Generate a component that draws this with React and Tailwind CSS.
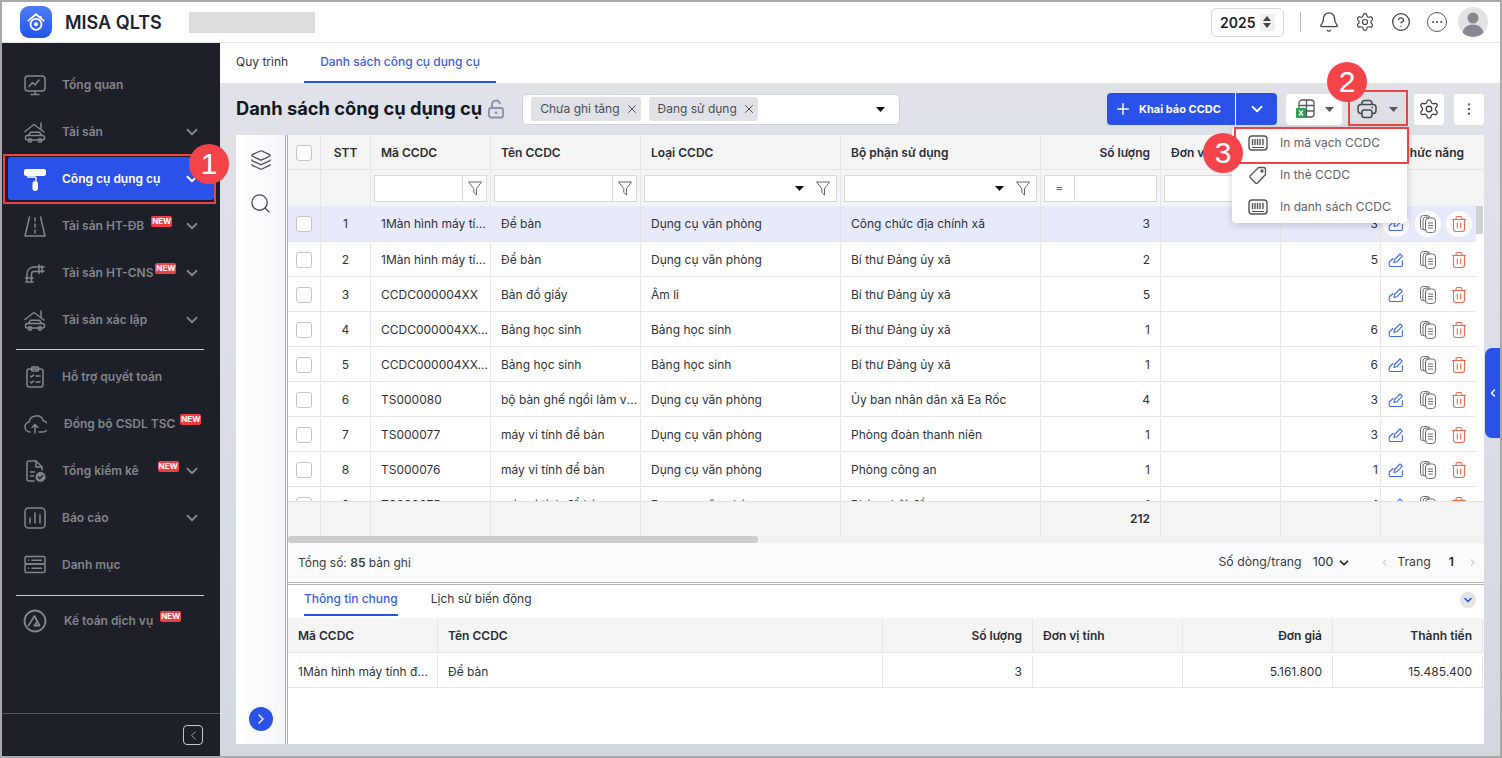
import React from "react";
import { Bell, Settings, CircleHelp, Ellipsis, Layers, Search, Plus, ChevronDown, ChevronLeft, ChevronRight, X, EllipsisVertical } from "lucide-react";

const S = ({ size = 24, className = "", children, sw = 1.5, vb = "0 0 24 24" }) => (
  <svg width={size} height={size} viewBox={vb} fill="none" stroke="currentColor" strokeWidth={sw} strokeLinecap="round" strokeLinejoin="round" className={className}>{children}</svg>
);

const HouseCar = () => (
  <S><path d="M2 11.5 11 4.5 21 12" /><path d="M18 9.5V3" /><path d="M5.5 15.5 7.5 12.2h9l2 3.3" /><rect x="2.5" y="15.5" width="19" height="4.5" rx="2" /><circle cx="7" cy="20.5" r="1.7" /><circle cx="17" cy="20.5" r="1.7" /></S>
);
const sideIcons = {
  monitor: <S><rect x="2" y="3" width="20" height="15" rx="3" /><path d="M6 13.5l3.5-4 2.5 2.5 4-5" /><path d="M12 18v3M8 21.5h8" /></S>,
  house: <HouseCar />,
  roller: <svg width="24" height="24" viewBox="0 0 24 24"><rect x="1" y="2" width="22" height="7" rx="2.2" fill="#fff" /><path d="M4 10h8a1 1 0 0 1 1 1v3" fill="none" stroke="#fff" strokeWidth="1.4" /><rect x="9.5" y="14" width="5.5" height="10" rx="2.7" fill="#fff" /></svg>,
  road: <S><path d="M6.5 3 2 22h20L17.5 3" /><path d="M12 4v3M12 10v3M12 16v3" /></S>,
  pipe: <S><path d="M4 20v-7a7 7 0 0 1 7-7h5" /><path d="M8.5 20v-7a2.5 2.5 0 0 1 2.5-2.5h5" /><path d="M16 4v8.5M19 5v6.5M16 6h3M16 10.5h3M19 6h2M19 10h2" /><path d="M2.5 17h7.5M2.5 21h7.5" /></S>,
  clip: <S><rect x="4" y="4" width="16" height="18" rx="2.2" /><rect x="8.5" y="2" width="7" height="4" rx="1" /><path d="M7.5 11l1 1 2-2M7.5 17l1 1 2-2M13 11h4M13 17h4" /></S>,
  cloud: <S><path d="M7 20a5 5 0 0 1-1-9.9A7.5 7.5 0 0 1 20.5 9a5.5 5.5 0 0 1-1 11H16" /><path d="M12 21v-8M9 15.5l3-3 3 3" /></S>,
  file: <svg width="24" height="24" viewBox="0 0 24 24" fill="none" stroke="currentColor" strokeWidth="1.5" strokeLinecap="round" strokeLinejoin="round"><path d="M11 22H6a2 2 0 0 1-2-2V4a2 2 0 0 1 2-2h7l6 6v3" /><path d="M13 2v6h6M7.5 13h4M7.5 17h3" /><circle cx="17.5" cy="18" r="5" fill="currentColor" stroke="none" /><path d="M15.3 18l1.6 1.6 2.8-3" stroke="#1d2029" /></svg>,
  chart: <S><rect x="2" y="2" width="20" height="20" rx="3.5" /><path d="M7 17v-5M12 17V7M17 17v-8" /></S>,
  list: <S><rect x="2" y="3.5" width="20" height="7.5" rx="1.5" /><rect x="2" y="11" width="20" height="8.5" rx="1.5" /><path d="M5.5 7.2h.1M9 7.2h9.5M5.5 15.2h.1M9 15.2h9.5" /></S>,
  logo: <S sw={1.8}><circle cx="12" cy="12" r="10.5" /><path d="M5.5 16.5 11.5 7l5 9.5h-5l2-3" /></S>,
};

const Ic = ({ n }) => <span className="w-[24px] h-[24px] shrink-0 flex items-center justify-center">{sideIcons[n]}</span>;

const New = ({ ml }) => (
  <span className={`${ml} relative -top-[4px] h-[11px] w-[21px] rounded-[2px] bg-[#ee3f46] text-white text-[8px] leading-[11px] font-bold text-center shrink-0`}>NEW</span>
);

const NavItem = ({ icon, label, chev, badge, active, shift }) => (
  <div className={`h-[47px] flex items-center ${active ? "text-white" : "text-[#83868d]"}`}>
    <div className={`flex items-center w-full pl-[21px] pr-[19px] ${active ? "h-[43px] mx-[6px] !pl-[15px] !pr-[13px] rounded-[3px] bg-[#2b52e8]" : "h-[47px]"}`}>
      <Ic n={icon} />
      <span className={`${shift ? "ml-[17px]" : "ml-[15px]"} text-[12px] whitespace-nowrap font-semibold`}>{label}</span>
      {badge && <New ml={badge} />}
      {chev && <ChevronDown size={18} strokeWidth={2.4} className="ml-auto shrink-0" />}
    </div>
  </div>
);

const Sidebar = () => (
  <aside className="w-[218px] shrink-0 bg-[#1d2029] flex flex-col pt-[18px]">
    <NavItem icon="monitor" label="Tổng quan" />
    <NavItem icon="house" label="Tài sản" chev />
    <NavItem icon="roller" label="Công cụ dụng cụ" chev active />
    <NavItem icon="road" label="Tài sản HT-ĐB" chev badge="ml-[7px]" />
    <NavItem icon="pipe" label="Tài sản HT-CNS" chev badge="ml-[2px]" />
    <NavItem icon="house" label="Tài sản xác lập" chev />
    <div className="mt-[6px] mb-[3px] ml-[14px] mr-[16px] h-[1px] bg-[#c9ccd3]" />
    <NavItem icon="clip" label="Hỗ trợ quyết toán" />
    <NavItem icon="cloud" label="Đồng bộ CSDL TSC" badge="ml-[5px]" shift />
    <NavItem icon="file" label="Tổng kiểm kê" chev badge="ml-[19px]" />
    <NavItem icon="chart" label="Báo cáo" chev />
    <NavItem icon="list" label="Danh mục" />
    <div className="mt-[7px] mb-[1px] ml-[14px] mr-[16px] h-[1px] bg-[#c9ccd3]" />
    <NavItem icon="logo" label="Kế toán dịch vụ" badge="ml-[7px]" shift />
    <div className="mt-auto h-[43px] border-t border-[#54565d] flex items-center justify-end pr-[17px]">
      <span className="w-[20px] h-[20px] border border-[#c4c6cb] rounded-[4px] flex items-center justify-center text-[#c4c6cb]"><ChevronLeft size={15} strokeWidth={1.2} /></span>
    </div>
  </aside>
);

const Header = () => (
  <header className="h-[41px] shrink-0 bg-white border-b border-[#e3e3e3] flex items-center pl-[18px] pr-[12px]">
    <span className="w-[32px] h-[32px] rounded-[9px] bg-gradient-to-b from-[#4d7cf8] to-[#2353ea] flex items-center justify-center">
      <svg width="22" height="22" viewBox="0 0 24 24" fill="none" stroke="#fff" strokeWidth="2" strokeLinejoin="round"><path d="M3 11 12 3.5 21 11" /><path d="M17 5.5V8" /><circle cx="12" cy="14.5" r="6" /><circle cx="12" cy="14.5" r="2.2" fill="#fff" stroke="none" /></svg>
    </span>
    <span className="ml-[13px] text-[18px] font-semibold text-[#1d2330]">MISA QLTS</span>
    <span className="ml-[27px] w-[126px] h-[21px] bg-[#dedddc] blur-[0.5px]" />
    <div className="ml-auto flex items-center text-[#3d3f45]">
      <div className="w-[73px] h-[29px] border border-[#d8d8d8] rounded-[5px] flex items-center pl-[8px] gap-[4px]">
        <span className="text-[14px] font-semibold text-[#20242c]">2025</span>
        <span className="w-[15px] h-[17px] bg-[#f0f0f0] flex flex-col items-center justify-center gap-[2px]">
          <svg width="8" height="5" viewBox="0 0 8 5"><path d="M4 0 8 5H0z" fill="#444" /></svg>
          <svg width="8" height="5" viewBox="0 0 8 5"><path d="M4 5 8 0H0z" fill="#444" /></svg>
        </span>
      </div>
      <span className="ml-[16px] w-[1px] h-[20px] bg-[#bdbdbd]" />
      <Bell size={22} strokeWidth={1.4} className="ml-[17px]" />
      <Settings size={20} strokeWidth={1.4} className="ml-[15px]" />
      <CircleHelp size={20} strokeWidth={1.5} className="ml-[16px]" />
      <span className="ml-[16px] w-[20px] h-[20px] rounded-full border border-[#55585e] flex items-center justify-center"><Ellipsis size={14} strokeWidth={1.5} /></span>
      <span className="ml-[11px] w-[30px] h-[30px] rounded-full bg-[#e3e3e3] overflow-hidden flex items-center justify-center">
        <svg width="30" height="30" viewBox="0 0 30 30"><circle cx="15" cy="11" r="5.5" fill="#858890" /><path d="M4 30c0-9 5-12.500 11-12.500S26 21 26 30z" fill="#858890" /></svg>
      </span>
    </div>
  </header>
);

const Filter = () => (
  <svg width="16" height="16" viewBox="0 0 16 16" fill="none" stroke="#666" strokeWidth="1" strokeLinejoin="round" className="shrink-0"><path d="M1.500 2h13L9.500 8.500V15L6.800 12.500V8.500z" /></svg>
);
const Caret = ({ c = "#111" }) => <svg width="9" height="5" viewBox="0 0 9 5" className="shrink-0"><path d="M0 0h9L4.500 5z" fill={c} /></svg>;
const Barcode = () => (
  <svg width="20" height="16" viewBox="0 0 20 16" fill="none" stroke="#505359" className="shrink-0"><rect x="1" y="1" width="18" height="14" rx="3" strokeWidth="1.4" /><path d="M4.500 4v6M7 4v6M9.500 4v6M12 4v6M15 4v6" strokeWidth="1.4" /><path d="M4 12.500h12" strokeWidth="1" /></svg>
);
const Tag = () => (
  <svg width="20" height="20" viewBox="0 0 20 20" fill="none" stroke="#505359" strokeWidth="1.3" strokeLinejoin="round" className="shrink-0"><path d="M10.500 2.500h5a2 2 0 0 1 2 2v5l-8 8.500a1.400 1.400 0 0 1-2 0L2.300 12.800a1.400 1.400 0 0 1 0-2z" /><circle cx="14" cy="6" r="1" /></svg>
);
const Excel = () => (
  <svg width="22" height="22" viewBox="0 0 22 22" fill="none" className="shrink-0"><rect x="5" y="2" width="15" height="17" rx="3" stroke="#55585e" strokeWidth="1.3" /><path d="M5 7.500h15M5 13h15M12.500 2v17" stroke="#55585e" strokeWidth="1.300" /><rect x="2" y="10" width="10" height="10" rx="1" fill="#2e9e4f" /><path d="M5 12.500l4 5M9 12.500l-4 5" stroke="#fff" strokeWidth="1.300" /></svg>
);
const PrintIc = () => (
  <svg width="20" height="20" viewBox="0 0 20 20" fill="none" stroke="#45484e" strokeWidth="1.5" strokeLinejoin="round" className="shrink-0"><path d="M5 5.500V4.300A2.800 2.800 0 0 1 7.800 1.500h4.400A2.800 2.800 0 0 1 15 4.300v1.200" /><path d="M5 14.500H4a3 3 0 0 1-3-3V8.500a3 3 0 0 1 3-3h12a3 3 0 0 1 3 3v3a3 3 0 0 1-3 3h-1" /><rect x="5" y="11" width="10" height="7.500" rx="2.200" /><path d="M14.500 8.500h1.500" /></svg>
);
const Lock = () => (
  <svg width="18" height="20" viewBox="0 0 18 20" fill="none" stroke="#8a92a3" strokeWidth="1.8" className="shrink-0"><path d="M5 9V5.500a4 4 0 0 1 7.800-1.200" strokeLinecap="round" /><rect x="2" y="9" width="14" height="9.500" rx="2" /><circle cx="9" cy="13.700" r="1.300" fill="#8a92a3" stroke="none" /></svg>
);
const Edit = () => (
  <svg width="16" height="16" viewBox="0 0 16 16" fill="none" stroke="#3f6af0" strokeWidth="1.1" strokeLinejoin="round" strokeLinecap="round" className="shrink-0"><path d="M6 10.500l.5-3L12 2l2.300 2.200L8.800 9.800z" /><path d="M5 6.500 1.200 10v3.300a1.200 1.200 0 0 0 1.200 1.200h10.800a1.200 1.200 0 0 0 1.200-1.200V8.500" /></svg>
);
const Copy = () => (
  <svg width="18" height="20" viewBox="0 0 18 20" fill="none" stroke="#6b6d72" strokeWidth="1" strokeLinecap="round" className="shrink-0"><path d="M5 15.500H3.500a2 2 0 0 1-2-2v-9a3 3 0 0 1 3-3h4a2 2 0 0 1 2 1.500" /><path d="M7 16H6a2 2 0 0 1-2-2V6a3 3 0 0 1 3-3h3" /><rect x="6.500" y="4" width="10" height="14.500" rx="3" /><path d="M9.500 9h4M9.500 11.500h4M9.500 14h4" strokeWidth="1.200" /></svg>
);
const Trash = () => (
  <svg width="16" height="18" viewBox="0 0 16 18" fill="none" stroke="#ee6a50" strokeWidth="1.1" strokeLinejoin="round" className="shrink-0"><path d="M1 4.500h14" /><path d="M5 4.500V3a1.500 1.500 0 0 1 1.500-1.500h3A1.500 1.500 0 0 1 11 3v1.500" /><path d="M2.500 4.500v9.500a2.500 2.500 0 0 0 2.500 2.500h6a2.500 2.500 0 0 0 2.500-2.500V4.500" /><path d="M6.300 7.500v6M9.700 7.500v6" /></svg>
);

const W = ["w-[33px]", "w-[50px]", "w-[120px]", "w-[150px]", "w-[200px]", "w-[200px]", "w-[120px]", "w-[120px]", "w-[100px]"];
const Box = () => <span className="w-[16px] h-[16px] block border border-[#c5c5c5] rounded-[3px] bg-white" />;

const rows = [
  ["1", "1Màn hình máy tính để bàn", "Để bàn", "Dụng cụ văn phòng", "Công chức địa chính xã", "3", "3"],
  ["2", "1Màn hình máy tính để bàn", "Để bàn", "Dụng cụ văn phòng", "Bí thư Đảng ủy xã", "2", "5"],
  ["3", "CCDC000004XX", "Bản đồ giấy", "Âm li", "Bí thư Đảng ủy xã", "5", ""],
  ["4", "CCDC000004XX-01", "Bảng học sinh", "Bảng học sinh", "Bí thư Đảng ủy xã", "1", "6"],
  ["5", "CCDC000004XX-02", "Bảng học sinh", "Bảng học sinh", "Bí thư Đảng ủy xã", "1", "6"],
  ["6", "TS000080", "bộ bàn ghế ngồi làm việc", "Dụng cụ văn phòng", "Ủy ban nhân dân xã Ea Rốc", "4", "3"],
  ["7", "TS000077", "máy vi tính để bàn", "Dụng cụ văn phòng", "Phòng đoàn thanh niên", "1", "3"],
  ["8", "TS000076", "máy vi tính để bàn", "Dụng cụ văn phòng", "Phòng công an", "1", "1"],
  ["9", "TS000075", "máy vi tính để bàn", "Dụng cụ văn phòng", "Phòng hội đồng", "1", "1"],
];

const cellB = "border-r border-[#e6e6e6] shrink-0 h-full flex items-center";
const Row = ({ r, i }) => {
  const hi = i === 0;
  return (
    <div className={`${hi ? "h-[36px] bg-[#e6eafb]" : "h-[35px] bg-white"} pt-[1px] flex border-b border-[#e6e6e6] text-[12px] text-[#2f3238]`}>
      <div className={`${W[0]} ${cellB} justify-center`}><Box /></div>
      <div className={`${W[1]} ${cellB} justify-center`}>{r[0]}</div>
      <div className={`${W[2]} ${cellB} pl-[10px] pr-[2px]`}><span className="truncate">{r[1]}</span></div>
      <div className={`${W[3]} ${cellB} pl-[10px] pr-[2px]`}><span className="truncate">{r[2]}</span></div>
      <div className={`${W[4]} ${cellB} px-[10px]`}><span className="truncate">{r[3]}</span></div>
      <div className={`${W[5]} ${cellB} px-[10px]`}><span className="truncate">{r[4]}</span></div>
      <div className={`${W[6]} ${cellB} px-[10px] justify-end`}>{r[5]}</div>
      <div className={`${W[7]} ${cellB}`} />
      <div className={`${W[8]} ${cellB} pr-[2px] justify-end`}>{r[6]}</div>
      <div className="flex-1 h-full flex items-center pl-[2px]">
        <span className={`w-[26px] h-[26px] rounded-full flex items-center justify-center ${hi ? "bg-white" : ""}`}><Edit /></span>
        <span className={`ml-[6px] w-[26px] h-[26px] rounded-full flex items-center justify-center ${hi ? "bg-white" : ""}`}><Copy /></span>
        <span className={`ml-[5px] w-[26px] h-[26px] rounded-full flex items-center justify-center ${hi ? "bg-white" : ""}`}><Trash /></span>
      </div>
    </div>
  );
};

const HeadCell = ({ w, children, cls = "" }) => <div className={`${w} ${cellB} px-[10px] ${cls}`}>{children}</div>;

const Input = ({ children, cls = "" }) => <div className={`h-[27px] w-full bg-white border border-[#d9d9d9] flex items-center ${cls}`}>{children}</div>;

const MainTable = () => (
  <div className="flex-1 min-w-0 flex flex-col">
    <div className="h-[35px] pt-[1px] flex bg-[#f5f5f5] border-b border-[#e6e6e6] text-[12px] font-semibold text-[#2a2d33] shrink-0">
      <div className={`${W[0]} ${cellB} justify-center`}><Box /></div>
      <HeadCell w={W[1]} cls="justify-center !px-0">STT</HeadCell>
      <HeadCell w={W[2]}>Mã CCDC</HeadCell>
      <HeadCell w={W[3]}>Tên CCDC</HeadCell>
      <HeadCell w={W[4]}>Loại CCDC</HeadCell>
      <HeadCell w={W[5]}>Bộ phận sử dụng</HeadCell>
      <HeadCell w={W[6]} cls="justify-end">Số lượng</HeadCell>
      <HeadCell w={W[7]}>Đơn vị tính</HeadCell>
      <HeadCell w={W[8]} cls="justify-end">Đơn giá</HeadCell>
      <div className="flex-1 h-full flex items-center justify-center">Chức năng</div>
    </div>
    <div className="h-[36px] flex bg-[#f5f5f5] shrink-0">
      <div className={`${W[0]} ${cellB}`} />
      <div className={`${W[1]} ${cellB}`} />
      <div className={`${W[2]} ${cellB} px-[3px]`}><Input cls="justify-end"><span className="h-full w-[24px] border-l border-[#d9d9d9] flex items-center justify-center"><Filter /></span></Input></div>
      <div className={`${W[3]} ${cellB} px-[3px]`}><Input cls="justify-end"><span className="h-full w-[24px] border-l border-[#d9d9d9] flex items-center justify-center"><Filter /></span></Input></div>
      <div className={`${W[4]} ${cellB} px-[3px]`}><Input cls="justify-end pr-[5px] gap-[11px]"><Caret /><Filter /></Input></div>
      <div className={`${W[5]} ${cellB} px-[3px]`}><Input cls="justify-end pr-[5px] gap-[11px]"><Caret /><Filter /></Input></div>
      <div className={`${W[6]} ${cellB} px-[3px]`}><Input><span className="h-full w-[30px] border-r border-[#d9d9d9] flex items-center justify-center text-[12px] text-[#666]">=</span></Input></div>
      <div className={`${W[7]} ${cellB} px-[3px]`}><Input /></div>
      <div className={`${W[8]} ${cellB} px-[3px]`}><Input /></div>
      <div className="flex-1" />
    </div>
    <div className="h-[295px] shrink-0 overflow-hidden flex">
      <div className="flex-1 min-w-0">
        {rows.map((r, i) => <Row key={i} r={r} i={i} />)}
      </div>
      <div className="w-[8px] shrink-0 bg-white"><div className="w-[7px] h-[28px] bg-[#cfd0d3]" /></div>
    </div>
    <div className="h-[35px] flex bg-[#f5f5f5] border-t border-[#e3e3e3] text-[12px] font-semibold text-[#2a2d33] shrink-0">
      {W.map((w, i) => (
        <div key={w + i} className={`${w} ${cellB} px-[10px] justify-end`}>{i === 6 ? "212" : ""}</div>
      ))}
    </div>
    <div className="h-[7px] bg-[#f1f1f1] shrink-0"><div className="w-[470px] h-full bg-[#cdcdcd] rounded-[3px]" /></div>
    <div className="h-[39px] shrink-0 bg-[#fafbfc] flex items-center px-[10px] text-[12px] text-[#3a3d44]">
      <span>Tổng số: <b className="font-semibold">85</b> bản ghi</span>
      <div className="ml-auto flex items-center -mr-[4px] text-[12.3px]">
        <span>Số dòng/trang</span>
        <span className="ml-[11px] text-[#2a2d33]">100</span>
        <ChevronDown size={14} strokeWidth={3} className="ml-[4px] text-[#222]" />
        <ChevronLeft size={11} className="ml-[28px] text-[#aaa]" />
        <span className="ml-[7px]">Trang</span>
        <b className="ml-[18px] font-semibold text-[#2a2d33]">1</b>
        <ChevronRight size={11} className="ml-[13px] text-[#aaa]" />
      </div>
    </div>
    <div className="h-[3px] shrink-0 border-y border-[#b5b5b5] bg-white" />
    <div className="h-[33px] shrink-0 bg-white flex items-start pl-[16px] pr-[8px] text-[12px] text-[#33363c]">
      <span className="h-[31px] pb-[2px] flex items-center font-medium text-[#3a60e6] border-b-2 border-[#2b52e8]">Thông tin chung</span>
      <span className="ml-[33px] h-[31px] pb-[4px] flex items-center">Lịch sử biến động</span>
      <span className="ml-auto mt-[7px] w-[16px] h-[16px] rounded-full bg-[#e3e4e7] flex items-center justify-center text-[#2b52e8]"><ChevronDown size={12} strokeWidth={3} /></span>
    </div>
    <div className="h-[35px] pt-[1px] shrink-0 flex bg-[#f5f5f5] border-b border-[#e6e6e6] text-[12px] font-semibold text-[#2a2d33]">
      <div className={`w-[150px] ${cellB} px-[10px]`}>Mã CCDC</div>
      <div className={`w-[445px] ${cellB} px-[10px]`}>Tên CCDC</div>
      <div className={`w-[150px] ${cellB} px-[10px] justify-end`}>Số lượng</div>
      <div className={`w-[150px] ${cellB} px-[10px]`}>Đơn vị tính</div>
      <div className={`w-[150px] ${cellB} px-[10px] justify-end`}>Đơn giá</div>
      <div className={`w-[150px] ${cellB} px-[10px] justify-end`}>Thành tiền</div>
    </div>
    <div className="h-[35px] pt-[3px] shrink-0 flex border-b border-[#e6e6e6] text-[12px] text-[#2f3238] bg-white">
      <div className={`w-[150px] ${cellB} pl-[10px] pr-[4px]`}><span className="truncate">1Màn hình máy tính để bàn</span></div>
      <div className={`w-[445px] ${cellB} px-[10px]`}>Để bàn</div>
      <div className={`w-[150px] ${cellB} px-[10px] justify-end`}>3</div>
      <div className={`w-[150px] ${cellB} px-[10px]`} />
      <div className={`w-[150px] ${cellB} px-[10px] justify-end`}>5.161.800</div>
      <div className={`w-[150px] ${cellB} px-[10px] justify-end`}>15.485.400</div>
    </div>
    <div className="flex-1 bg-white" />
  </div>
);

const Toolbar = () => (
  <div className="h-[52px] shrink-0 flex items-center">
    <h1 className="text-[18.3px] font-bold text-[#14171f] whitespace-nowrap">Danh sách công cụ dụng cụ</h1>
    <span className="ml-[5px]"><Lock /></span>
    <div className="ml-[17px] w-[378px] h-[31px] bg-white border border-[#cfd2d8] rounded-[5px] flex items-center pl-[8px] pr-[14px] gap-[8px] text-[12px] text-[#4a4d54]">
      <span className="h-[24px] pl-[9px] pr-[2px] bg-[#e0e2e7] rounded-[3px] flex items-center gap-[5px]">Chưa ghi tăng <X size={14} strokeWidth={1.7} /></span>
      <span className="h-[24px] pl-[9px] pr-[2px] bg-[#e0e2e7] rounded-[3px] flex items-center gap-[5px]">Đang sử dụng <X size={14} strokeWidth={1.7} /></span>
      <span className="ml-auto"><Caret /></span>
    </div>
    <div className="ml-auto flex items-center">
      <div className="w-[170px] h-[32px] rounded-[4px] bg-[#2b52e8] text-white flex items-center text-[11px] font-bold">
        <span className="w-[129px] h-full flex items-center pl-[7px] gap-[7px] border-r border-white"><Plus size={18} strokeWidth={2} />Khai báo CCDC</span>
        <span className="flex-1 flex justify-center"><ChevronDown size={18} strokeWidth={2.4} /></span>
      </div>
      <div className="ml-[9px] w-[56px] h-[31px] bg-white rounded-[4px] flex items-center justify-center gap-[9px]"><Excel /><Caret c="#55585e" /></div>
      <div className="ml-[7px] w-[57px] h-[31px] bg-[#dedfe4] flex items-center justify-center gap-[12px]"><PrintIc /><Caret c="#55585e" /></div>
      <div className="ml-[8px] w-[30px] h-[31px] bg-white rounded-[3px] flex items-center justify-center text-[#3d3f45]"><Settings size={22} strokeWidth={1.4} /></div>
      <div className="ml-[10px] w-[30px] h-[31px] bg-white rounded-[3px] flex items-center justify-center text-[#55585e]"><EllipsisVertical size={16} strokeWidth={1.6} /></div>
    </div>
  </div>
);

const Badge = ({ n, cls }) => (
  <span className={`absolute w-[40px] h-[40px] rounded-full bg-[#f4444a] text-white text-[30px] leading-[40px] text-center font-['Liberation_Sans'] ${cls}`}>{n}</span>
);

const Menu = () => (
  <div className="absolute left-[1230px] top-[125px] w-[175px] h-[96px] bg-white rounded-[4px] shadow-[0_2px_8px_rgba(0,0,0,0.18)] text-[12px] text-[#5f6269]">
    {[[<Barcode key="a" />, "In mã vạch CCDC"], [<Tag key="b" />, "In thẻ CCDC"], [<Barcode key="c" />, "In danh sách CCDC"]].map(([ic, t]) => (
      <div key={t} className="h-[32px] flex items-center pl-[16px]">
        <span className="w-[20px] flex justify-center">{ic}</span>
        <span className="ml-[12px]">{t}</span>
      </div>
    ))}
  </div>
);

export default function App() {
  return (
    <div className="relative w-[1502px] h-[758px] overflow-hidden border-2 border-[#a9a9a9] font-['Inter',sans-serif] flex flex-col bg-white">
      <Header />
      <div className="flex-1 min-h-0 flex">
        <Sidebar />
        <main className="flex-1 min-w-0 flex flex-col bg-gradient-to-b from-[#e1e3e9] to-[#d3d8e0]">
          <div className="h-[40px] shrink-0 bg-white flex text-[12px] text-[#33363c]">
            <span className="px-[16px] pb-[2px] flex items-center h-full">Quy trình</span>
            <span className="px-[16px] pb-[1px] flex items-center h-full font-medium text-[#3a60e6] border-b-2 border-[#2b52e8]">Danh sách công cụ dụng cụ</span>
          </div>
          <div className="flex-1 min-h-0 flex flex-col pl-[16px] pr-[16px] pb-[12px]">
            <Toolbar />
            <div className="flex-1 min-h-0 flex bg-white">
              <div className="w-[49px] shrink-0 bg-gradient-to-r from-white to-[#f4f6f9] flex flex-col items-center pt-[14px] text-[#4b4e55]">
                <Layers size={22} strokeWidth={1.4} />
                <Search size={23} strokeWidth={1.4} className="mt-[21px]" />
                <span className="mt-auto mb-[13px] w-[24px] h-[24px] rounded-full bg-[#2b52e8] flex items-center justify-center text-white"><ChevronRight size={16} strokeWidth={2} /></span>
              </div>
              <div className="w-[3px] shrink-0 border-x border-[#aeaeae] bg-white" />
              <MainTable />
            </div>
          </div>
        </main>
      </div>

      <span className="absolute left-[1483px] top-[346px] w-[15px] h-[90px] rounded-l-[7px] bg-[#2b52e8] flex items-center justify-center text-white"><ChevronLeft size={12} strokeWidth={3} /></span>
      <Menu />
      <span className="absolute left-[1px] top-[152px] w-[213px] h-[50px] border-2 border-[#ef4146]" />
      <span className="absolute left-[1346px] top-[88px] w-[60px] h-[36px] border-2 border-[#ef4146]" />
      <span className="absolute left-[1232px] top-[125px] w-[175px] h-[37px] border-2 border-[#ef4146]" />
      <Badge n="1" cls="left-[187px] top-[142px]" />
      <Badge n="2" cls="left-[1325px] top-[60px]" />
      <Badge n="3" cls="left-[1201px] top-[131px]" />
    </div>
  );
}
